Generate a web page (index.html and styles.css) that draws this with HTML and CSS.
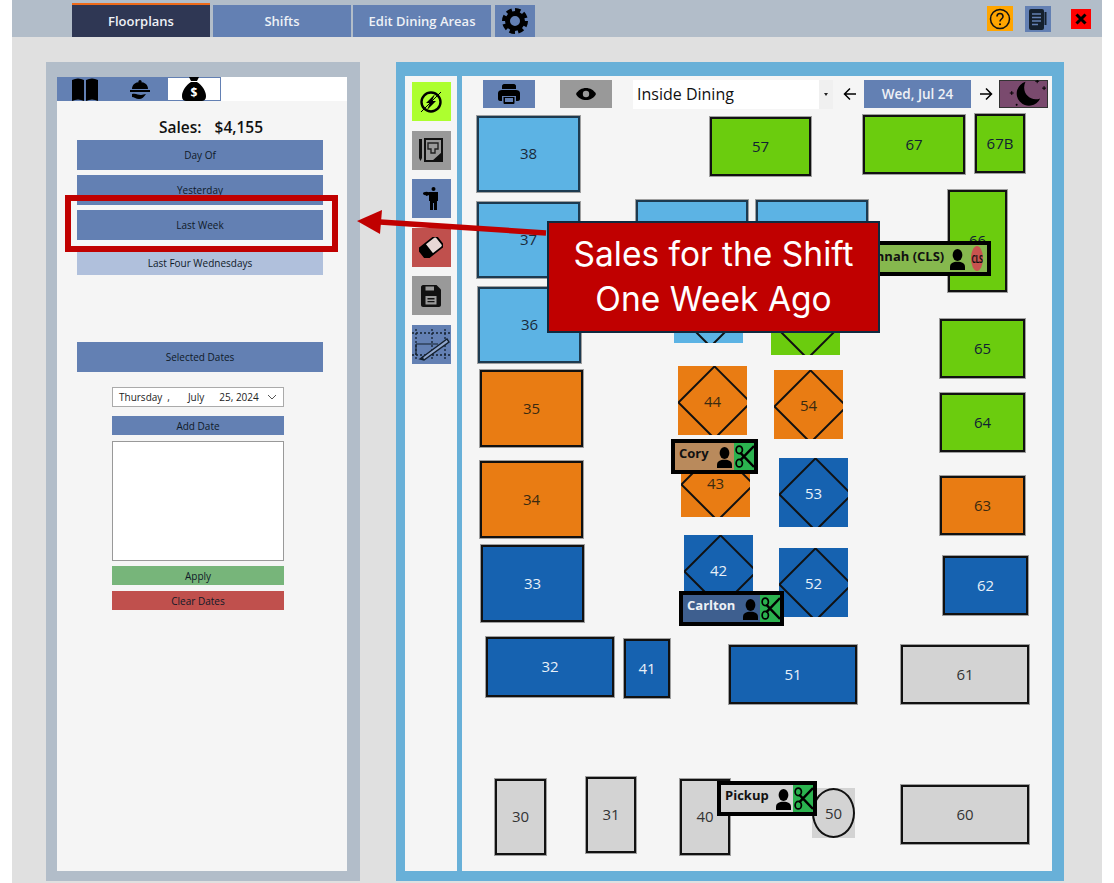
FILE: index.html
```html
<!DOCTYPE html>
<html lang="en">
<head>
    <meta charset="UTF-8">
    <meta name="viewport" content="width=device-width, initial-scale=1.0">
    <title>Floorplans</title>
    <link rel="stylesheet" href="styles.css">
</head>
<body>
    <svg class="defs" width="0" height="0">
        <symbol id="person" viewBox="0 0 20 28">
            <ellipse cx="10" cy="8" rx="6.5" ry="8"/>
            <path d="M0 28v-4c0-5 4-7 10-7s10 2 10 7v4z"/>
        </symbol>
        <symbol id="scissors" viewBox="0 0 20 24">
            <path d="M20 1 5.500 16M20 23 5.500 8" fill="none" stroke="#000" stroke-width="2.600"/>
            <ellipse cx="4.500" cy="5" rx="3.300" ry="4" fill="none" stroke="#000" stroke-width="1.800"/>
            <ellipse cx="4.500" cy="19" rx="3.300" ry="4" fill="none" stroke="#000" stroke-width="1.800"/>
        </symbol>
    </svg>

    <div class="page">
        <header class="topbar">
            <nav class="tabs">
                <div class="tab active">Floorplans</div>
                <div class="tab">Shifts</div>
                <div class="tab">Edit Dining Areas</div>
                <div class="tab gear">
                    <svg width="28" height="28" viewBox="0 0 28 28">
                        <circle cx="14" cy="14" r="10.5" fill="none" stroke="#000" stroke-width="5" stroke-dasharray="5.2 3"/>
                        <circle cx="14" cy="14" r="7.5" fill="none" stroke="#000" stroke-width="5"/>
                    </svg>
                </div>
            </nav>
            <div class="top-actions">
                <div class="help">
                    <svg width="22" height="22" viewBox="0 0 22 22">
                        <circle cx="11" cy="11" r="9.5" fill="none" stroke="#111" stroke-width="1.5"/>
                        <path d="M8 8.500c0-4 6-4 6 0 0 2.500-3 2.500-3 5" fill="none" stroke="#111" stroke-width="1.600"/>
                        <circle cx="11" cy="16.300" r="1"/>
                    </svg>
                </div>
                <div class="notes">
                    <svg width="20" height="24" viewBox="0 0 20 24">
                        <rect x="1" y="2" width="15" height="21" rx="2" fill="#14202e"/>
                        <path d="M4 7h9M4 10.500h9M4 14h9M4 17.500h6" stroke="#6380b3" stroke-width="1.300"/>
                        <path d="M17.500 5v13" stroke="#14202e" stroke-width="2"/>
                    </svg>
                </div>
                <div class="close">
                    <svg width="12" height="12" viewBox="0 0 12 12">
                        <path d="M1.500 1.500l9 9M10.500 1.500l-9 9" stroke="#000" stroke-width="3"/>
                    </svg>
                </div>
            </div>
        </header>

        <main class="content">
            <section class="sales-panel">
                <div class="sales-inner">
                    <div class="side-tabs">
                        <div class="side-tab">
                            <svg width="28" height="23" viewBox="0 0 28 23">
                                <path d="M1 2c4-2 8-2 12 0v21c-4-2-8-2-12 0zM15 2c4-2 8-2 12 0v21c-4-2-8-2-12 0z"/>
                            </svg>
                        </div>
                        <div class="side-tab">
                            <svg width="20" height="21" viewBox="0 0 20 21">
                                <path d="M2 10c0-4 3-7 8-7s8 3 8 7z"/>
                                <circle cx="10" cy="2.500" r="1.600"/>
                                <rect x="0" y="11" width="20" height="2"/>
                                <path d="M2 15c4-1 6 1 9 1l5-1c-2 3-4 5-7 5-3 0-5-2-7-2z"/>
                            </svg>
                        </div>
                        <div class="side-tab current">
                            <svg width="24" height="24" viewBox="0 0 24 24">
                                <path d="M7 0h10l-2 4H9zM9 5h6c5 3 9 9 9 14 0 4-2 5-5 5H5c-3 0-5-1-5-5C0 14 4 8 9 5z"/>
                                <text x="12" y="20" class="bag-sign">$</text>
                            </svg>
                        </div>
                    </div>

                    <div class="sales-total"><span>Sales:</span><span>$4,155</span></div>

                    <div class="range-list">
                        <button class="range-btn">Day Of</button>
                        <button class="range-btn">Yesterday</button>
                        <button class="range-btn">Last Week</button>
                        <button class="range-btn light">Last Four Wednesdays</button>
                    </div>

                    <button class="range-btn selected-btn">Selected Dates</button>

                    <div class="date-box">
                        <div class="date-picker">
                            <span>Thursday</span><span class="comma">,</span><span class="month">July</span><span class="day">25, 2024</span>
                            <svg width="10" height="6" viewBox="0 0 10 6">
                                <path d="M1 1l4 4 4-4" fill="none" stroke="#555" stroke-width="1"/>
                            </svg>
                        </div>
                        <button class="small-btn">Add Date</button>
                        <div class="date-list"></div>
                        <button class="small-btn apply">Apply</button>
                        <button class="small-btn clear">Clear Dates</button>
                    </div>
                </div>
            </section>

            <section class="floor-panel">
                <aside class="tools">
                    <div class="tool lime">
                        <svg width="28" height="28" viewBox="0 0 28 28">
                            <circle cx="14" cy="14" r="9.500" fill="none" stroke="#000" stroke-width="2.400"/>
                            <path d="M18 6l-9 9h4l-3 7 9-9h-4z"/>
                            <path d="M4 24 24 4" stroke="#000" stroke-width="1"/>
                        </svg>
                    </div>
                    <div class="tool grey">
                        <svg width="24" height="24" viewBox="0 0 24 24">
                            <path d="M0 1h3v19l-1.500 3L0 20z" fill="#111"/>
                            <rect x="6" y="1" width="17" height="22" fill="none" stroke="#111" stroke-width="2"/>
                            <path d="M9 5h10v6h-3v4h-4v-4H9z" fill="none" stroke="#222" stroke-width="1.400"/>
                            <path d="M23 14v9H13z" fill="#111"/>
                        </svg>
                    </div>
                    <div class="tool blue">
                        <svg width="16" height="23" viewBox="0 0 16 23">
                            <circle cx="10.500" cy="2" r="2"/>
                            <path d="M6 5h9v9h-1v9h-3v-7h-1v7H7v-9H6z"/>
                            <path d="M6 5.500 3 7.500v1.500l3-1z"/>
                            <ellipse cx="3.500" cy="6.500" rx="3.500" ry="1.800"/>
                        </svg>
                    </div>
                    <div class="tool red">
                        <svg width="24" height="21" viewBox="0 0 24 21">
                            <g transform="rotate(-38 12 10.500)">
                                <rect x="1" y="4" width="22" height="13" rx="2.500" fill="#e8d8d6" stroke="#000" stroke-width="1.800"/>
                                <path d="M3.500 4H10V17H3.500A2.500 2.500 0 0 1 1 14.500V6.500A2.500 2.500 0 0 1 3.500 4z"/>
                            </g>
                        </svg>
                    </div>
                    <div class="tool grey">
                        <svg width="20" height="22" viewBox="0 0 20 22">
                            <path d="M2 0h13.500L20 4.500V20c0 1-1 2-2 2H2c-1 0-2-1-2-2V2C0 1 1 0 2 0z" fill="#111"/>
                            <rect x="4.500" y="1.500" width="8.500" height="4" fill="#999"/>
                            <rect x="4.500" y="11" width="11" height="8.500" fill="#999"/>
                            <path d="M6.500 13.800h7M6.500 16.600h7" stroke="#111" stroke-width="1.400"/>
                        </svg>
                    </div>
                    <div class="tool blue">
                        <svg width="39" height="39" viewBox="0 0 39 39">
                            <path d="M0 8h39M0 30h39M4 4v32M20 4v32M33 4v32" stroke="#14202e" stroke-width="1.300" stroke-dasharray="2 2"/>
                            <path d="M4 19h22M4 30V19" stroke="#14202e" stroke-width="1.200" fill="none"/>
                            <path d="M8 34 35 14l2 3L12 35z" fill="#8fa5cc" stroke="#14202e" stroke-width="1.400"/>
                            <path d="M8 34l3-3 1 4z" fill="#14202e"/>
                        </svg>
                    </div>
                </aside>

                <div class="floor">
                    <div class="floor-bar">
                        <div class="bar-btn print">
                            <svg width="22" height="20" viewBox="0 0 22 20">
                                <path d="M6 0h10c1 0 2 1 2 2v3H4V2c0-1 1-2 2-2zM4 6h14c2 0 4 1 4 3v6c0 1-1 2-2 2h-2v-5H4v5H2c-1 0-2-1-2-2V9c0-2 2-3 4-3z"/>
                                <path d="M5.500 13h11v6c0 .5-.5 1-1 1h-9c-.5 0-1-.5-1-1z"/>
                                <rect x="7" y="14" width="8" height="4" fill="#6380b3"/>
                            </svg>
                        </div>
                        <div class="bar-btn eye">
                            <svg width="20" height="12" viewBox="0 0 20 12">
                                <path d="M0 6c4-8 16-8 20 0-4 8-16 8-20 0z"/>
                                <circle cx="10" cy="6" r="3.200" fill="#999"/>
                            </svg>
                        </div>
                        <div class="area-select">
                            <span>Inside Dining</span>
                            <div class="caret"></div>
                        </div>
                        <svg class="nav-arrow first" width="14" height="14" viewBox="0 0 14 14">
                            <path d="M13 7H2M7 1.500 1.500 7 7 12.500" fill="none" stroke="#000" stroke-width="1.500"/>
                        </svg>
                        <div class="date-btn">Wed, Jul 24</div>
                        <svg class="nav-arrow" width="14" height="14" viewBox="0 0 14 14">
                            <path d="M1 7h11M7 1.500 12.500 7 7 12.500" fill="none" stroke="#000" stroke-width="1.500"/>
                        </svg>
                        <div class="night-btn">
                            <svg width="48" height="28" viewBox="0 0 48 28">
                                <path d="M26 1.500a12.500 12.500 0 1 0 15 17c-10 4-20-6-15-17z"/>
                                <path d="M36 1h4M38-1v4M43 8h4M45 6v4M10 13h4M12 11v4M16 25h2M17 24v2" stroke="#000" stroke-width="1"/>
                            </svg>
                        </div>
                    </div>

                    <div class="canvas">
                        <div class="table lt t38">38</div>
                        <div class="table lt t37">37</div>
                        <div class="table lt t36">36</div>
                        <div class="table or t35">35</div>
                        <div class="table or t34">34</div>
                        <div class="table db t33">33</div>
                        <div class="table db t32">32</div>
                        <div class="table db t41">41</div>
                        <div class="table db t51">51</div>
                        <div class="table gy t61">61</div>
                        <div class="table gy t30">30</div>
                        <div class="table gy t31">31</div>
                        <div class="table gy t40">40</div>
                        <div class="table gy t60">60</div>
                        <div class="table gn t57">57</div>
                        <div class="table gn t67">67</div>
                        <div class="table gn t67b">67B</div>
                        <div class="table gn t66">66</div>
                        <div class="table gn t65">65</div>
                        <div class="table gn t64">64</div>
                        <div class="table or t63">63</div>
                        <div class="table db t62">62</div>
                        <div class="table lt t47"></div>
                        <div class="table lt t56"></div>

                        <div class="table diamond lt d46"></div>
                        <div class="table diamond gn d55"></div>
                        <div class="table diamond or d44"><span>44</span></div>
                        <div class="table diamond or d54"><span>54</span></div>
                        <div class="table diamond or d43"><span>43</span></div>
                        <div class="table diamond db d53"><span>53</span></div>
                        <div class="table diamond db d42"><span>42</span></div>
                        <div class="table diamond db d52"><span>52</span></div>

                        <div class="round-back"><div class="round">50</div></div>

                        <div class="tag tag-hannah">
                            <span class="tag-name">Hannah (CLS)</span>
                            <svg class="tag-person" width="15" height="23"><use href="#person"/></svg>
                            <div class="cls"><span>CLS</span></div>
                        </div>
                        <div class="tag tag-cory">
                            <span class="tag-name">Cory</span>
                            <svg class="tag-person" width="15" height="23"><use href="#person"/></svg>
                            <div class="cut"><svg width="19" height="23"><use href="#scissors"/></svg></div>
                        </div>
                        <div class="tag tag-carlton">
                            <span class="tag-name">Carlton</span>
                            <svg class="tag-person" width="15" height="23"><use href="#person"/></svg>
                            <div class="cut"><svg width="19" height="23"><use href="#scissors"/></svg></div>
                        </div>
                        <div class="tag tag-pickup">
                            <span class="tag-name">Pickup</span>
                            <svg class="tag-person" width="15" height="23"><use href="#person"/></svg>
                            <div class="cut"><svg width="19" height="23"><use href="#scissors"/></svg></div>
                        </div>
                    </div>
                </div>
            </section>
        </main>

        <!-- annotation on top of the app -->
        <div class="mark-box"></div>
        <svg class="mark-arrow" width="200" height="40" viewBox="0 0 200 40">
            <path d="M24 15 190 26" stroke="#c00000" stroke-width="5.500"/>
            <path d="M1 14 26 3 24 27z" fill="#c00000"/>
        </svg>
        <div class="callout">Sales for the Shift<br>One Week Ago</div>
    </div>
</body>
</html>
```

FILE: styles.css
```css
* {
    box-sizing: border-box;
}
body {
    margin: 0;
    background: white;
    font-family: "Open Sans", Arial, sans-serif;
    color: #111;
}
button {
    font-family: inherit;
    border: none;
    padding: 0;
    color: #0f1a28;
}
.defs {
    position: absolute;
}
.page {
    position: relative;
    width: 1114px;
    height: 883px;
    padding: 0 12px;
    overflow: hidden;
}

/* top bar */
.topbar {
    height: 37px;
    background: #b2bdc9;
    display: flex;
    justify-content: space-between;
    padding: 3px 11px 0 60px;
}
.tabs {
    display: flex;
    align-items: flex-end;
    gap: 2px;
}
.tab {
    width: 138px;
    height: 32px;
    background: #6380b3;
    color: #eef1f6;
    font-size: 13px;
    font-weight: 600;
    display: flex;
    align-items: center;
    justify-content: center;
}
.tab.active {
    height: 34px;
    margin-right: 1px;
    background: #2f3754;
    border-top: 2px solid #ee6a1a;
}
.tab.gear {
    width: 40px;
    margin-left: 2px;
}
.top-actions {
    display: flex;
    align-items: center;
    height: 31px;
}
.help {
    width: 26px;
    height: 25px;
    background: #ffa500;
    display: flex;
    align-items: center;
    justify-content: center;
}
.notes {
    width: 26px;
    height: 26px;
    margin-left: 12px;
    background: #6380b3;
    display: flex;
    align-items: center;
    justify-content: center;
}
.close {
    width: 20px;
    height: 20px;
    margin-left: 20px;
    background: #ff0000;
    display: flex;
    align-items: center;
    justify-content: center;
}

/* main area */
.content {
    height: 846px;
    background: #e0e0e0;
    display: flex;
    padding: 25px 0 2px 34px;
}

/* sales panel */
.sales-panel {
    width: 314px;
    background: #b2bdc9;
    padding: 15px 13px 10px 11px;
}
.sales-inner {
    height: 100%;
    background: #f5f5f5;
}
.side-tabs {
    display: flex;
    height: 24px;
    background: white;
}
.side-tab {
    width: 55px;
    background: #6380b3;
    display: flex;
    align-items: center;
    justify-content: center;
}
.side-tab.current {
    width: 54px;
    background: white;
    border: 1px solid #6380b3;
}
.bag-sign {
    fill: white;
    font-size: 12px;
    font-weight: 700;
    text-anchor: middle;
}
.sales-total {
    display: flex;
    justify-content: center;
    gap: 13px;
    margin: 15px 0 0 18px;
    height: 22px;
    line-height: 22px;
    font-size: 15.5px;
    font-weight: 600;
}
.range-list {
    display: flex;
    flex-direction: column;
    gap: 5px;
    padding: 0 24px 0 20px;
    margin-top: 2px;
}
.range-btn {
    display: block;
    width: 246px;
    height: 30px;
    background: #6380b3;
    font-size: 10px;
}
.range-btn.light {
    height: 25px;
    margin-top: 5px;
    background: #b0c0dc;
}
.selected-btn {
    margin: 67px 0 0 20px;
}
.date-box {
    width: 172px;
    margin: 15px 0 0 55px;
    display: flex;
    flex-direction: column;
}
.date-picker {
    height: 20px;
    background: white;
    border: 1px solid #aaa;
    display: flex;
    align-items: center;
    padding: 0 6px;
    font-size: 10px;
    color: #222;
}
.comma {
    margin-left: 5px;
}
.month {
    margin-left: 18px;
}
.day {
    margin-left: 15px;
}
.date-picker svg {
    margin-left: auto;
}
.small-btn {
    height: 19px;
    margin-top: 9px;
    background: #6380b3;
    font-size: 10px;
}
.date-list {
    height: 120px;
    margin-top: 6px;
    background: white;
    border: 1px solid #999;
}
.small-btn.apply {
    margin-top: 5px;
    background: #77b57a;
}
.small-btn.clear {
    margin-top: 6px;
    background: #c0504d;
}

/* floor panel */
.floor-panel {
    width: 668px;
    margin-left: 36px;
    background: #68b0d8;
    padding: 14px 12px 10px 9px;
    display: flex;
    gap: 5px;
}
.tools {
    width: 52px;
    background: #f5f5f5;
    display: flex;
    flex-direction: column;
    align-items: center;
    gap: 9.6px;
    padding-top: 6px;
}
.tool {
    width: 39px;
    height: 39px;
    display: flex;
    align-items: center;
    justify-content: center;
}
.tool.lime {
    background: #adff2f;
}
.tool.grey {
    background: #999;
}
.tool.blue {
    background: #6380b3;
}
.tool.red {
    background: #c0504d;
}
.floor {
    flex: 1;
    background: #f5f5f5;
}
.floor-bar {
    height: 34px;
    display: flex;
    align-items: center;
    padding: 2px 4px 0 21px;
}
.bar-btn {
    width: 52px;
    height: 28px;
    display: flex;
    align-items: center;
    justify-content: center;
}
.bar-btn.print {
    background: #6380b3;
}
.bar-btn.eye {
    margin-left: 25px;
    background: #999;
}
.area-select {
    width: 200px;
    height: 29px;
    margin-left: 21px;
    background: white;
    display: flex;
    align-items: center;
    justify-content: space-between;
    padding-left: 4px;
    font-size: 16px;
    color: #111;
}
.caret {
    width: 14px;
    height: 100%;
    background: #f0f0f0;
    position: relative;
}
.caret::after {
    content: "";
    position: absolute;
    left: 5px;
    top: 13px;
    border: 2.5px solid transparent;
    border-top: 3px solid #222;
}
.nav-arrow {
    margin-left: 8px;
}
.nav-arrow.first {
    margin-left: 10px;
}
.date-btn {
    width: 107px;
    height: 28px;
    margin-left: 7px;
    background: #6380b3;
    color: #eef1f6;
    font-size: 13.5px;
    font-weight: 600;
    display: flex;
    align-items: center;
    justify-content: center;
}
.night-btn {
    width: 49px;
    height: 28px;
    margin-left: 6px;
    background: #7a4a6e;
    border: 1px solid #333;
    display: flex;
    align-items: center;
    justify-content: center;
}

/* tables sit at their place on the plan */
.canvas {
    position: relative;
    height: 761px;
}
.table {
    position: absolute;
    display: flex;
    align-items: center;
    justify-content: center;
    border: 2px solid #111;
    box-shadow: 0 0 0 1px rgba(30, 30, 30, 0.4);
    font-size: 15px;
    padding-bottom: 2px;
}
.lt { background: #5cb3e4; color: #1a2a3a; border-color: #1d3a50; }
.gn { background: #6bcc0e; color: #123; }
.or { background: #e97c13; color: #3a2a10; }
.db { background: #1662b0; color: #e8f0f8; }
.gy { background: #d3d3d3; color: #333; }

.t38 { left: 15px; top: 6px; width: 103px; height: 76px; }
.t37 { left: 15px; top: 92px; width: 103px; height: 76px; }
.t36 { left: 16px; top: 177px; width: 103px; height: 76px; }
.t35 { left: 18px; top: 260px; width: 103px; height: 77px; }
.t34 { left: 18px; top: 351px; width: 103px; height: 77px; }
.t33 { left: 19px; top: 435px; width: 103px; height: 77px; }
.t32 { left: 24px; top: 527px; width: 128px; height: 60px; }
.t41 { left: 162px; top: 529px; width: 46px; height: 59px; }
.t51 { left: 267px; top: 535px; width: 128px; height: 59px; }
.t61 { left: 439px; top: 535px; width: 128px; height: 59px; }
.t30 { left: 33px; top: 669px; width: 51px; height: 76px; }
.t31 { left: 124px; top: 667px; width: 50px; height: 76px; }
.t40 { left: 218px; top: 669px; width: 50px; height: 76px; }
.t60 { left: 439px; top: 675px; width: 128px; height: 59px; }
.t57 { left: 248px; top: 7px; width: 101px; height: 59px; }
.t67 { left: 401px; top: 5px; width: 102px; height: 59px; }
.t67b { left: 513px; top: 4px; width: 50px; height: 59px; }
.t66 { left: 486px; top: 80px; width: 59px; height: 102px; }
.t65 { left: 478px; top: 209px; width: 85px; height: 59px; }
.t64 { left: 478px; top: 283px; width: 85px; height: 59px; }
.t63 { left: 478px; top: 366px; width: 85px; height: 59px; }
.t62 { left: 481px; top: 446px; width: 85px; height: 59px; }
.t47 { left: 174px; top: 90px; width: 112px; height: 60px; }
.t56 { left: 294px; top: 90px; width: 112px; height: 60px; }

.diamond {
    width: 69px;
    height: 69px;
    border: none;
    overflow: hidden;
    box-shadow: none;
    padding-bottom: 0;
}
.diamond::before {
    content: "";
    position: absolute;
    left: 10px;
    top: 10px;
    width: 49px;
    height: 49px;
    border: 2px solid #111;
    transform: rotate(45deg);
}
.diamond span {
    position: relative;
}
.d46 { left: 212px; top: 164px; }
.d55 { left: 309px; top: 176px; }
.d44 { left: 216px; top: 256px; }
.d54 { left: 312px; top: 260px; }
.d43 { left: 219px; top: 338px; }
.d53 { left: 317px; top: 348px; }
.d42 { left: 222px; top: 425px; }
.d52 { left: 317px; top: 438px; }

.round-back {
    position: absolute;
    left: 350px;
    top: 678px;
    width: 43px;
    height: 50px;
    background: #d3d3d3;
}
.round {
    width: 100%;
    height: 100%;
    border: 2px solid #111;
    border-radius: 50%;
    display: flex;
    align-items: center;
    justify-content: center;
    font-size: 15px;
    color: #333;
}

/* server tags */
.tag {
    position: absolute;
    height: 35px;
    display: flex;
    align-items: center;
    border: 4px solid #000;
    font-size: 13px;
    font-weight: 700;
}
.tag-name {
    flex: 1;
    padding-left: 4px;
    margin-top: -8px;
    white-space: nowrap;
}
.tag-person {
    flex: none;
    margin: 1px 2px 0 0;
}
.cut {
    width: 20px;
    height: 100%;
    background: #2bb34f;
    display: flex;
    align-items: center;
    justify-content: center;
}
.cls {
    width: 12px;
    height: 25px;
    margin: 0 4px 0 4px;
    border-radius: 50%;
    background: #c9534f;
    display: flex;
    align-items: center;
    justify-content: center;
}
.cls span {
    font-size: 7px;
    transform: scaleY(1.6);
    letter-spacing: -0.5px;
}
.tag-hannah {
    left: 389px;
    top: 131px;
    width: 140px;
    background: #86b84e;
}
.tag-hannah .tag-name {
    margin-top: -5px;
    padding-left: 3px;
}
.tag-cory {
    left: 209px;
    top: 329px;
    width: 87px;
    background: #b98a5c;
}
.tag-carlton {
    left: 217px;
    top: 481px;
    width: 105px;
    background: #3e5f8f;
}
.tag-carlton .tag-name {
    color: #eef1f6;
}
.tag-pickup {
    left: 255px;
    top: 671px;
    width: 100px;
    background: #d3d3d3;
}

/* annotation */
.mark-box {
    position: absolute;
    left: 65px;
    top: 195px;
    width: 273px;
    height: 57px;
    border: 6px solid #c00000;
}
.mark-arrow {
    position: absolute;
    left: 356px;
    top: 207px;
}
.callout {
    position: absolute;
    left: 547px;
    top: 221px;
    width: 333px;
    height: 112px;
    background: #c00000;
    border: 2px solid #0f2a3f;
    color: white;
    font-family: "Inter", "Open Sans", sans-serif;
    font-size: 33.5px;
    line-height: 45px;
    text-align: center;
    padding-top: 9px;
}
```
